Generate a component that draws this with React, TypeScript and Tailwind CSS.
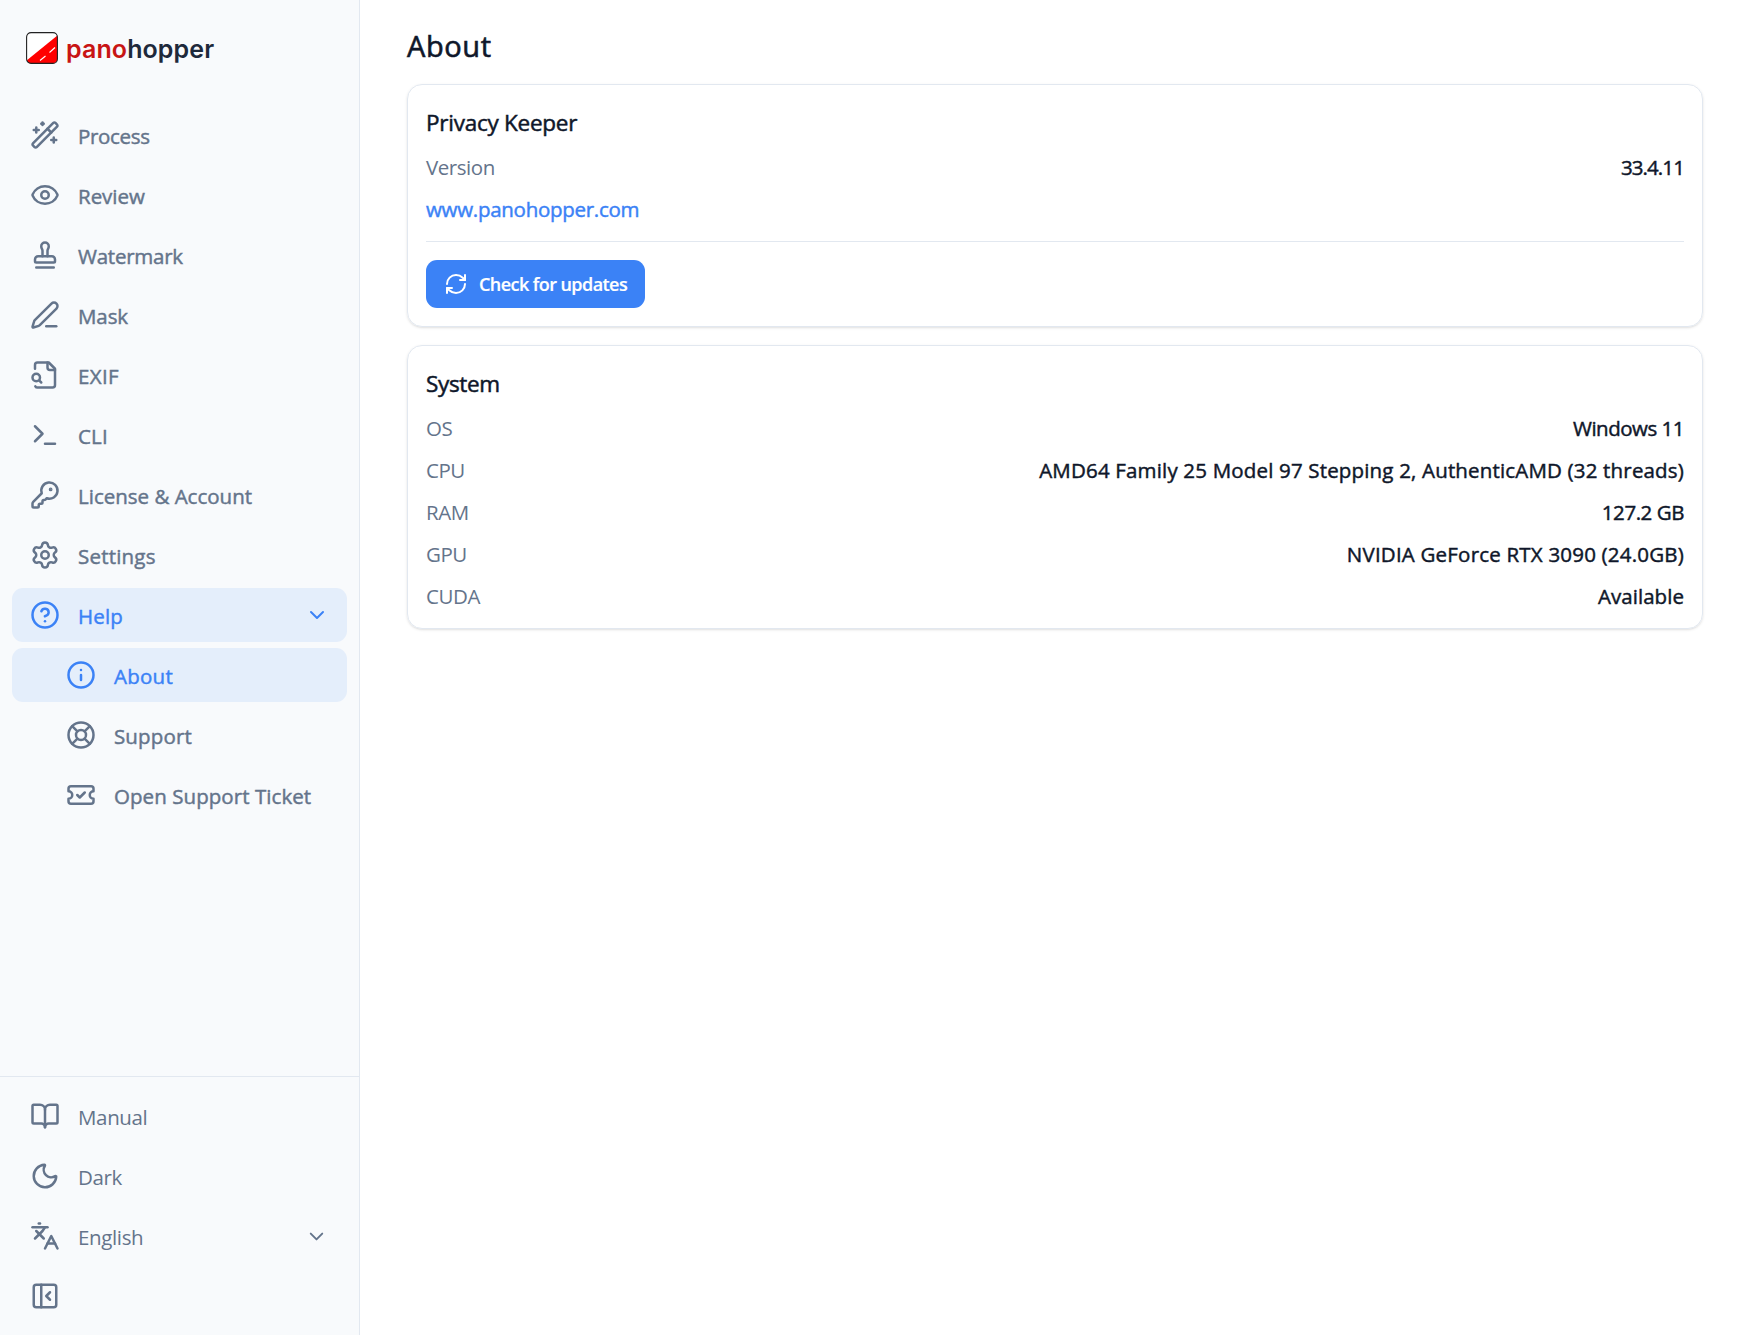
import {
  BookOpen,
  ChevronDown,
  CircleHelp,
  Eye,
  Info,
  KeyRound,
  Languages,
  LifeBuoy,
  Moon,
  PanelLeftClose,
  PenLine,
  RefreshCw,
  Settings,
  Stamp,
  Terminal,
  TicketCheck,
  WandSparkles,
} from 'lucide-react';
import type { ComponentType } from 'react';
import clsx from 'clsx';

type IconType = ComponentType<{ size?: number; className?: string }>;

type NavEntry = {
  icon: IconType;
  label: string;
  tracking: string;
  active?: boolean;
  nested?: boolean;
  expandable?: boolean;
};

function FileLookup({ size = 24, className }: { size?: number; className?: string }) {
  return (
    <svg
      width={size}
      height={size}
      viewBox="0 0 24 24"
      fill="none"
      stroke="currentColor"
      strokeWidth="2"
      strokeLinecap="round"
      strokeLinejoin="round"
      className={className}
    >
      <path d="M14 2v4a2 2 0 0 0 2 2h4" />
      <path d="M4.268 21a2 2 0 0 0 1.727 1H18a2 2 0 0 0 2-2V7l-5-5H6a2 2 0 0 0-2 2v3" />
      <path d="m9 18-1.5-1.5" />
      <circle cx="5" cy="14" r="3" />
    </svg>
  );
}

const navItems: NavEntry[] = [
  { icon: WandSparkles, label: 'Process', tracking: 'tracking-[-0.33px]' },
  { icon: Eye, label: 'Review', tracking: 'tracking-[-0.02px]' },
  { icon: Stamp, label: 'Watermark', tracking: 'tracking-[-0.25px]' },
  { icon: PenLine, label: 'Mask', tracking: 'tracking-[-0.1px]' },
  { icon: FileLookup, label: 'EXIF', tracking: 'tracking-[0.34px]' },
  { icon: Terminal, label: 'CLI', tracking: 'tracking-[0.2px]' },
  { icon: KeyRound, label: 'License & Account', tracking: 'tracking-normal' },
  { icon: Settings, label: 'Settings', tracking: 'tracking-[0.2px]' },
  { icon: CircleHelp, label: 'Help', tracking: 'tracking-[0.17px]', active: true, expandable: true },
  { icon: Info, label: 'About', tracking: 'tracking-[0.25px]', active: true, nested: true },
  { icon: LifeBuoy, label: 'Support', tracking: 'tracking-[0.13px]', nested: true },
  { icon: TicketCheck, label: 'Open Support Ticket', tracking: 'tracking-[0.06px]', nested: true },
];

const systemRows = [
  { label: 'OS', value: 'Windows 11', tracking: 'tracking-[-0.5px]' },
  {
    label: 'CPU',
    value: 'AMD64 Family 25 Model 97 Stepping 2, AuthenticAMD (32 threads)',
    tracking: 'tracking-[0.17px]',
  },
  { label: 'RAM', value: '127.2 GB', tracking: 'tracking-[-0.45px]' },
  { label: 'GPU', value: 'NVIDIA GeForce RTX 3090 (24.0GB)', tracking: 'tracking-[0.2px]' },
  { label: 'CUDA', value: 'Available', tracking: 'tracking-[0.05px]' },
];

function Logo() {
  return (
    <div className="flex h-[96px] shrink-0 items-center gap-2 pl-[26px]">
      <svg width="32" height="32" viewBox="0 0 32 32">
        <rect x="0.6" y="0.6" width="30.8" height="30.8" rx="4.5" fill="#fff" />
        <path d="M31.4 3.5V27a4.4 4.4 0 0 1-4.4 4.4H5A4.4 4.4 0 0 1 .9 28.3Z" fill="#ff0000" />
        <path d="M14 28.5 19.5 24M23.5 20.5 29 15.5" stroke="#fff" strokeWidth="1.1" />
        <rect x="0.6" y="0.6" width="30.8" height="30.8" rx="4.5" fill="none" stroke="#222" strokeWidth="1.1" />
      </svg>
      <span className="pt-[3px] font-['Inter'] text-[25px] leading-none font-semibold tracking-[0.1px] text-[#1e293b]">
        <span className="text-[#c81414]">pano</span>hopper
      </span>
    </div>
  );
}

function NavItem({ icon: Icon, label, tracking, active, nested, expandable }: NavEntry) {
  return (
    <button
      className={clsx(
        'flex h-[54px] w-full shrink-0 items-center rounded-[11px] pr-[18px] text-left',
        nested ? 'pl-[54px]' : 'pl-[18px]',
        active ? 'bg-[#e4eefb] text-[#3b82f6]' : 'text-[#64748b]',
      )}
    >
      <Icon size={30} className="shrink-0" />
      <span
        className={clsx(
          'ml-[18px] pt-0.5 text-[20.5px] leading-7 font-medium whitespace-nowrap [-webkit-text-stroke:0.45px]',
          tracking,
        )}
      >
        {label}
      </span>
      {expandable && <ChevronDown size={24} className="ml-auto" />}
    </button>
  );
}

function FooterItem({ icon: Icon, label, expandable }: { icon: IconType; label?: string; expandable?: boolean }) {
  return (
    <button className="flex h-[54px] w-full items-center pr-[19px] pl-[18px] text-[#64748b]">
      <Icon size={30} className="shrink-0" />
      {label && <span className="ml-[18px] pt-0.5 text-[20.5px] leading-7 tracking-[-0.35px]">{label}</span>}
      {expandable && <ChevronDown size={23} className="ml-auto" />}
    </button>
  );
}

function InfoRow({ label, value, tracking }: { label: string; value: string; tracking: string }) {
  return (
    <div className="flex h-[42px] items-center justify-between pb-0.5 text-[20.5px] leading-7">
      <span className="tracking-[-0.45px] text-[#64748b]">{label}</span>
      <span className={clsx('font-medium text-[#0f172a] [-webkit-text-stroke:0.45px]', tracking)}>{value}</span>
    </div>
  );
}

export default function App() {
  return (
    <div className="flex h-screen w-full overflow-hidden bg-white font-['Open_Sans','Noto_Sans',sans-serif]">
      <aside className="flex w-[360px] shrink-0 flex-col border-r border-[#e2e8f0] bg-[#f8fafc]">
        <Logo />
        <nav className="flex flex-1 flex-col gap-1.5 px-3 pt-3">
          {navItems.map((item) => (
            <NavItem key={item.label} {...item} />
          ))}
        </nav>
        <div className="flex flex-col gap-1.5 border-t border-[#e2e8f0] px-3 pt-3 pb-3">
          <FooterItem icon={BookOpen} label="Manual" />
          <FooterItem icon={Moon} label="Dark" />
          <FooterItem icon={Languages} label="English" expandable />
          <FooterItem icon={PanelLeftClose} />
        </div>
      </aside>

      <main className="flex flex-1 flex-col pt-[25px] pr-[46px] pl-[47px]">
        <h1 className="h-[59px] text-[29px] leading-[42px] font-medium tracking-[0.6px] text-[#0f172a] [-webkit-text-stroke:0.6px]">
          About
        </h1>

        <section className="h-[243px] rounded-[15px] border border-[#e2e8f0] px-[18px] shadow-sm">
          <h2 className="pt-[23px] pb-[9px] text-[22.5px] leading-[30px] font-medium tracking-[-0.25px] text-[#0f172a] [-webkit-text-stroke:0.5px]">
            Privacy Keeper
          </h2>
          <InfoRow label="Version" value="33.4.11" tracking="tracking-[-0.9px]" />
          <a className="flex h-[42px] items-center pb-0.5 text-[20.5px] leading-7 font-medium tracking-[-0.28px] text-[#3b82f6] [-webkit-text-stroke:0.45px]">
            www.panohopper.com
          </a>
          <div className="mt-[10px] border-t border-[#e2e8f0] pt-[18px]">
            <button className="flex h-12 w-[219px] items-center rounded-[11px] bg-[#3b82f6] pl-[18px] text-white">
              <RefreshCw size={24} />
              <span className="ml-[11px] text-[18px] font-semibold tracking-[-0.56px] whitespace-nowrap [-webkit-text-stroke:0.2px]">
                Check for updates
              </span>
            </button>
          </div>
        </section>

        <section className="mt-[18px] h-[284px] rounded-[15px] border border-[#e2e8f0] px-[18px] shadow-sm">
          <h2 className="pt-[23px] pb-[9px] text-[22.5px] leading-[30px] font-medium tracking-[-0.35px] text-[#0f172a] [-webkit-text-stroke:0.5px]">
            System
          </h2>
          {systemRows.map((row) => (
            <InfoRow key={row.label} {...row} />
          ))}
        </section>
      </main>
    </div>
  );
}
